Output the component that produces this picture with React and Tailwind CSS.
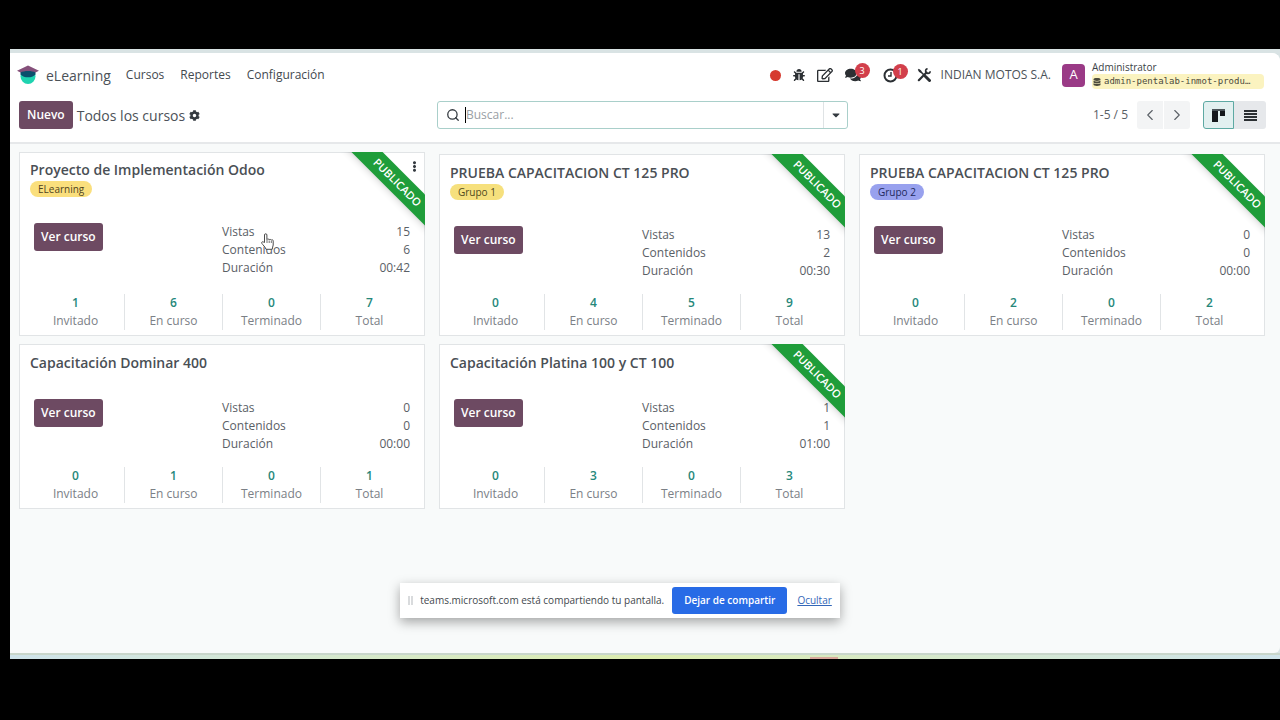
import React from 'react';
import { FaBug, FaCaretDown, FaCog, FaComments, FaDatabase, FaEllipsisV, FaRegEdit } from 'react-icons/fa';
import { ChevronLeft, ChevronRight, Search } from 'lucide-react';

const COURSES = [
  { title: 'Proyecto de Implementación Odoo', tag: 'ELearning', tagClass: 'bg-[#fadf7d] text-[#4f4320]', published: true, active: true, views: '15', contents: '6', duration: '00:42', stats: [1, 6, 0, 7] },
  { title: 'PRUEBA CAPACITACION CT 125 PRO', tag: 'Grupo 1', tagClass: 'bg-[#f6e07d] text-[#4f4a20]', published: true, views: '13', contents: '2', duration: '00:30', stats: [0, 4, 5, 9] },
  { title: 'PRUEBA CAPACITACION CT 125 PRO', tag: 'Grupo 2', tagClass: 'bg-[#98a1ee] text-[#22285c]', published: true, views: '0', contents: '0', duration: '00:00', stats: [0, 2, 0, 2] },
  { title: 'Capacitación Dominar 400', views: '0', contents: '0', duration: '00:00', stats: [0, 1, 0, 1] },
  { title: 'Capacitación Platina 100 y CT 100', published: true, views: '1', contents: '1', duration: '01:00', stats: [0, 3, 0, 3] },
];

const STAT_LABELS = ['Invitado', 'En curso', 'Terminado', 'Total'];

function Logo() {
  return (
    <svg width="22" height="20" viewBox="0 0 22 20" aria-hidden="true">
      <circle cx="11" cy="11.500" r="7.500" fill="#1fd3b0" />
      <path d="M3.500 5h15v4.500C16.500 11.500 14 12.300 11 12.300s-5.500-.8-7.500-2.800z" fill="#0b4f6c" />
      <path d="M11 0.500l11 5.200-3.500 1.800C15 5.500 7 5.500 3.500 7.500L0 5.700z" fill="#85507a" />
    </svg>
  );
}

function ClockIcon() {
  return (
    <svg width="15" height="15" viewBox="0 0 15 15" fill="none" stroke="#2b2f33" aria-hidden="true">
      <circle cx="7.500" cy="7.500" r="6" strokeWidth="2" />
      <path d="M8 4v4H5" strokeWidth="1.400" />
    </svg>
  );
}

function ToolsIcon() {
  return (
    <svg width="14" height="14" viewBox="0 0 14 14" fill="none" stroke="#2b2f33" aria-hidden="true">
      <path d="M3.500 3.500l7.500 7.500" strokeWidth="1.600" />
      <path d="M8.500 8.500l4 4" strokeWidth="3" strokeLinecap="round" />
      <path d="M1.800 12.200L9.500 4.500" strokeWidth="2.200" strokeLinecap="round" />
      <path d="M13.200 3.200a2.300 2.300 0 1 1-2.600-2.400" strokeWidth="1.600" />
      <path d="M.8 1.800l1-1 2.400 1.600.3 1.800-1 .6-1.400-.8z" fill="#2b2f33" stroke="none" />
    </svg>
  );
}

function HandCursor() {
  return (
    <svg className="absolute left-[241px] top-[80px]" width="13" height="17" viewBox="0 0 13 17" aria-hidden="true">
      <path d="M3.500 9.500V2a1.200 1.200 0 0 1 2.400 0v4.500a1.200 1.200 0 0 1 2.200.3 1.200 1.200 0 0 1 2.100.5 1.100 1.100 0 0 1 2 .8V12c0 1.500-1 2.500-1 4.300H5C4.500 14 1.800 12 .8 10.300c-.6-1.200.8-2 1.600-1.300z" fill="#fff" stroke="#4b4b4b" strokeWidth="1" />
      <path d="M6 7v3M8.200 7.500V10M10.300 8v2" stroke="#4b4b4b" strokeWidth=".8" />
    </svg>
  );
}

function Badge({ children }) {
  return (
    <span className="absolute -top-1 left-[10px] flex size-[15px] items-center justify-center rounded-full bg-[#d23f4b] text-[9px] leading-none text-white">{children}</span>
  );
}

function Navbar() {
  return (
    <nav className="flex h-11 items-center pr-4 pl-[7px]">
      <Logo />
      <a href="#" className="ml-[7px] text-[14px] text-[#4c5258]">eLearning</a>
      <div className="ml-[15px] flex gap-4 text-[12px] text-[#43494f]">
        <a href="#">Cursos</a>
        <a href="#">Reportes</a>
        <a href="#">Configuración</a>
      </div>
      <div className="ml-auto flex items-center text-[#2b2f33]">
        <button type="button" aria-label="Grabar" className="size-[11px] rounded-full bg-[#d63a2f]" />
        <button type="button" aria-label="Depurar" className="ml-3"><FaBug size={12} /></button>
        <button type="button" aria-label="Editar" className="ml-3"><FaRegEdit size={16} /></button>
        <button type="button" aria-label="Mensajes" className="relative ml-3"><FaComments size={16} /><Badge>3</Badge></button>
        <button type="button" aria-label="Actividades" className="relative ml-[22px]"><ClockIcon /><Badge>1</Badge></button>
        <button type="button" aria-label="Herramientas" className="ml-[19px]"><ToolsIcon /></button>
        <button type="button" className="ml-[10px] text-[12px] text-[#4c5258]">INDIAN MOTOS S.A.</button>
        <button type="button" className="ml-[11px] flex items-center text-left">
          <span className="flex size-[23px] items-center justify-center rounded-sm bg-[#9a3a86] text-[13px] text-white">A</span>
          <span className="ml-[7px] block w-[172px] text-[10px]">
            <span className="block h-[13px] leading-[13px] text-[#3c4248]">Administrator</span>
            <span className="flex h-[15px] items-center gap-[3px] rounded-sm bg-[#fbf3c0] pr-1 pl-px font-['DejaVu_Sans_Mono',monospace] text-[9px] text-[#4b4a3c]">
              <FaDatabase size={8} className="shrink-0" />
              <span className="whitespace-nowrap">admin-pentalab-inmot-produ…</span>
            </span>
          </span>
        </button>
      </div>
    </nav>
  );
}

function ControlPanel() {
  return (
    <div className="grid grid-cols-[1fr_411px_1fr] items-center border-b-2 border-[#e6e8ea] pt-1 pr-[14px] pb-[13px] pl-[9px]">
      <div className="flex items-center">
        <button type="button" className="h-7 rounded-[3px] bg-[#6d4a62] px-2 text-[12px] font-semibold text-white">Nuevo</button>
        <h1 className="ml-1 text-[14px] text-[#4c5258]">Todos los cursos</h1>
        <button type="button" aria-label="Acciones" className="ml-1 text-[#343a40]"><FaCog size={11} /></button>
      </div>
      <div className="flex h-7 items-center rounded-[3px] border border-[#a9cfca] bg-white">
        <Search size={14} strokeWidth={2.2} className="ml-2 shrink-0 text-[#343a40]" />
        <span className="ml-[5px] h-4 w-px bg-black" />
        <input aria-label="Buscar" placeholder="Buscar..." className="min-w-0 flex-1 text-[12px] text-[#43494f] outline-none placeholder:text-[#9aa0a5]" />
        <button type="button" aria-label="Opciones de búsqueda" className="flex h-full w-6 items-center justify-center border-l border-[#dfe3e5] text-[#343a40]"><FaCaretDown size={12} /></button>
      </div>
      <div className="flex items-center justify-end text-[12px] text-[#5a6066]">
        <span>1-5 / 5</span>
        <button type="button" aria-label="Anterior" className="ml-[9px] flex h-7 w-[26px] items-center justify-center rounded-l-[3px] bg-[#f3f4f5]"><ChevronLeft size={18} strokeWidth={1.5} /></button>
        <button type="button" aria-label="Siguiente" className="ml-px flex h-7 w-[26px] items-center justify-center rounded-r-[3px] bg-[#f3f4f5]"><ChevronRight size={18} strokeWidth={1.5} /></button>
        <button type="button" aria-label="Vista kanban" className="ml-[13px] flex h-7 w-[31px] items-center justify-center rounded-l-[3px] border border-[#5da9a3] bg-[#e2f0f0]">
          <svg width="13" height="13" viewBox="0 0 13 13" aria-hidden="true">
            <path d="M0 0h13v2H0z" fill="#4a5358" />
            <path d="M0 2h6v11H0zM8 2h5v5H8z" fill="#14181c" />
          </svg>
        </button>
        <button type="button" aria-label="Vista lista" className="flex h-7 w-8 items-center justify-center rounded-r-[3px] bg-[#e6e8eb]">
          <svg width="13" height="11" viewBox="0 0 13 11" fill="#2b2f33" aria-hidden="true">
            <path d="M0 0h13v2H0zM0 3h13v2H0zM0 6h13v2H0zM0 9h13v2H0z" />
          </svg>
        </button>
      </div>
    </div>
  );
}

function Ribbon() {
  return (
    <div className="pointer-events-none absolute -top-px -right-px size-[84px] overflow-hidden">
      <div className="absolute top-[18px] -right-[31px] flex h-[22px] w-[120px] rotate-45 items-center justify-center bg-[#1f9d3a] pl-1 text-[11px] font-semibold text-white shadow-md">PUBLICADO</div>
    </div>
  );
}

function CourseCard({ course }) {
  const details = [['Vistas', course.views], ['Contenidos', course.contents], ['Duración', course.duration]];
  return (
    <article className={`relative flex flex-col border border-[#e1e4e6] bg-white px-[6px] pb-[5px] ${course.active ? 'min-h-[184px] pt-[7px]' : 'pt-2'}`}>
      <h2 className="px-1 text-[14px] leading-5 font-semibold text-[#4a4f55]">{course.title}</h2>
      {course.tag && (
        <span className={`mx-1 mt-px h-4 self-start rounded-full px-2 text-[10px] leading-4 font-medium ${course.tagClass}`}>{course.tag}</span>
      )}
      <div className="mt-[26px] grid grid-cols-2 px-2">
        <div>
          <button type="button" className="h-7 rounded-[3px] bg-[#6d4a62] px-[7px] text-[12px] font-semibold text-white">Ver curso</button>
        </div>
        <dl className="text-[12px] leading-[18px] text-[#5a6066]">
          {details.map(([label, value]) => (
            <div key={label} className="flex justify-between">
              <dt>{label}</dt>
              <dd>{value}</dd>
            </div>
          ))}
        </dl>
      </div>
      <div className="mt-auto grid grid-cols-4 pt-[14px] text-center text-[12px] leading-[18px]">
        {STAT_LABELS.map((label, i) => (
          <a key={label} href="#" className="border-l border-[#e1e4e6] text-[#7b8086] first:border-transparent">
            <span className="block font-semibold text-[#26877a]">{course.stats[i]}</span>
            <span className="block">{label}</span>
          </a>
        ))}
      </div>
      {course.published && <Ribbon />}
      {course.active && (
        <>
          <button type="button" aria-label="Menú" className="absolute top-2 right-1 text-[#343a40]"><FaEllipsisV size={11} /></button>
          <HandCursor />
        </>
      )}
    </article>
  );
}

function ShareBar() {
  return (
    <div className="absolute inset-x-0 bottom-[41px] flex justify-center pr-[50px]">
      <div className="flex h-[35px] items-center bg-white pr-2 pl-2 text-[10px] text-[#43484e] shadow-[0_4px_12px_rgba(0,0,0,0.35)]">
        <span className="h-[9px] w-[5px] border-x-2 border-[#d9dbdd]" />
        <span className="ml-[7px]">teams.microsoft.com está compartiendo tu pantalla.</span>
        <button type="button" className="ml-2 h-[27px] rounded-[3px] bg-[#286be6] px-3 font-semibold text-white">Dejar de compartir</button>
        <a href="#" className="ml-[10px] text-[#3467b8] underline">Ocultar</a>
      </div>
    </div>
  );
}

export default function App() {
  return (
    <div className="flex min-h-screen flex-col bg-black pt-[49px] pb-[61px] pl-[10px] font-['Open_Sans','Noto_Sans',sans-serif]">
      <div className="relative flex flex-1 flex-col bg-[#d9e3e4] pt-1">
        <div className="flex flex-1 flex-col overflow-hidden rounded-tr-lg rounded-br-md bg-[#f8fafa]">
          <header className="bg-white">
            <Navbar />
            <ControlPanel />
          </header>
          <main className="grid grid-cols-3 items-end gap-x-[14px] gap-y-2 pt-2 pr-[15px] pl-[9px]">
            {COURSES.map((course, i) => <CourseCard key={i} course={course} />)}
          </main>
        </div>
        <div className="flex h-[6px] items-end border-t-2 border-[#c9d6cb] bg-linear-to-r from-[#cfe3ea] via-[#dcecae] to-[#cfe3ea] pl-[63%]">
          <span className="h-[2px] w-7 bg-[#d8a79b]" />
        </div>
        <ShareBar />
      </div>
    </div>
  );
}
